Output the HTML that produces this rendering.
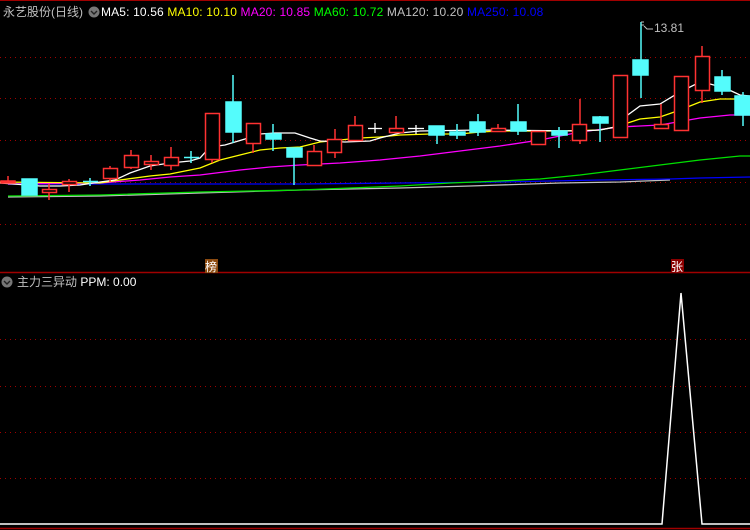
<!DOCTYPE html>
<html><head><meta charset="utf-8"><style>
body{margin:0;background:#000;width:750px;height:530px;overflow:hidden;position:relative;font-family:"Liberation Sans","Noto Sans CJK SC",sans-serif;}
.t{position:absolute;font-size:12px;white-space:nowrap;line-height:14px;}
svg{position:absolute;left:0;top:0}
</style></head><body>
<svg width="750" height="530" viewBox="0 0 750 530">
<line x1="0" y1="0.5" x2="750" y2="0.5" stroke="#a00000" stroke-width="1"/>
<line x1="0" y1="272.5" x2="750" y2="272.5" stroke="#a00000" stroke-width="1.5"/>
<line x1="0" y1="528.5" x2="750" y2="528.5" stroke="#a00000" stroke-width="1.5"/>
<g stroke="#a00000" stroke-width="1" stroke-dasharray="1 4" shape-rendering="crispEdges">
<line x1="0" y1="57.5" x2="750" y2="57.5"/><line x1="0" y1="98.5" x2="750" y2="98.5"/>
<line x1="0" y1="140.5" x2="750" y2="140.5"/><line x1="0" y1="182.5" x2="750" y2="182.5"/>
<line x1="0" y1="224.5" x2="750" y2="224.5"/>
<line x1="0" y1="339.5" x2="750" y2="339.5"/><line x1="0" y1="386.5" x2="750" y2="386.5"/>
<line x1="0" y1="432.5" x2="750" y2="432.5"/><line x1="0" y1="478.5" x2="750" y2="478.5"/>
</g>
<g fill="none" stroke-width="1.3">
<polyline stroke="#c0c0c0" points="8,197 100,196 200,193 300,190 400,188 470,186 560,183 620,182 670,180"/>
<polyline stroke="#0000ff" points="8,184 220,184 300,184 400,183 500,182 550,181 600,180 670,179 700,178 750,177"/>
<polyline stroke="#00e000" points="8,196 100,195 200,192 300,190 350,188 400,186 450,183 500,181 540,179 580,175 620,170 660,165 700,160 740,156 750,156"/>
<polyline stroke="#ff00ff" points="8,184 100,183 140,180 170,177 200,175 240,170 270,167 300,165 340,163 380,160 420,156 460,151 500,146 540,140 580,132 620,127 660,125 700,118 730,115 750,115"/>
<polyline stroke="#ffff00" points="0,182 100,183 120,180 150,176 170,174 200,168 220,160 240,155 260,150 280,148 300,147 320,142 340,140 360,138 380,137 400,135 430,134 460,134 480,132 500,131 560,131 600,130 615,127 640,119 660,117 680,110 700,102 720,99 750,99"/>
<polyline stroke="#ffffff" points="0,183 40,186 60,186 80,185 100,182 115,180 130,173 150,166 170,163 190,161 200,158 210,147 225,145 245,139 260,134 275,133 295,133 310,138 320,141 345,142 370,141 380,138 400,133 420,131 480,130 580,131 600,130 615,127 625,117 640,106 660,104 680,92 700,82 710,84 725,88 740,95 750,96"/>
</g>
<g stroke="#ff3232" stroke-width="1.5" fill="#000">
<line x1="8" y1="176" x2="8" y2="182"/><rect x="1" y="181" width="14" height="2" fill="#ff3232"/>
<line x1="49" y1="184" x2="49" y2="200"/><rect x="42.5" y="189.5" width="14" height="3"/>
<line x1="69" y1="179" x2="69" y2="192"/><rect x="62.5" y="181.5" width="14" height="3"/>
<line x1="110" y1="166" x2="110" y2="182"/><rect x="103.5" y="168.5" width="14" height="10"/>
<line x1="131" y1="150" x2="131" y2="169"/><rect x="124.5" y="155.5" width="14" height="12"/>
<line x1="151" y1="155" x2="151" y2="170"/><rect x="144.5" y="161.5" width="14" height="3"/>
<line x1="171" y1="147" x2="171" y2="170"/><rect x="164.5" y="157.5" width="14" height="8"/>
<line x1="212" y1="159" x2="212" y2="163"/><rect x="205.5" y="113.5" width="14" height="46"/>
<line x1="253" y1="143" x2="253" y2="153"/><rect x="246.5" y="123.5" width="14" height="20"/>
<line x1="314" y1="145" x2="314" y2="165"/><rect x="307.5" y="151.5" width="14" height="14"/>
<line x1="335" y1="129" x2="335" y2="158"/><rect x="327.5" y="139.5" width="14" height="13"/>
<line x1="355" y1="116" x2="355" y2="141"/><rect x="348.5" y="125.5" width="14" height="15"/>
<line x1="396" y1="116" x2="396" y2="132"/><rect x="389.5" y="128.5" width="14" height="4"/>
<line x1="498" y1="124" x2="498" y2="132"/><rect x="491.5" y="128.5" width="14" height="3"/>
<rect x="531.5" y="131.5" width="14" height="13"/>
<line x1="580" y1="99" x2="580" y2="144"/><rect x="572.5" y="124.5" width="14" height="16"/>
<line x1="620" y1="125" x2="620" y2="137"/><rect x="613.5" y="75.5" width="14" height="62"/>
<line x1="661" y1="104" x2="661" y2="128"/><rect x="654.5" y="124.5" width="14" height="4"/>
<rect x="674.5" y="76.5" width="14" height="54"/>
<line x1="702" y1="46" x2="702" y2="103"/><rect x="695.5" y="56.5" width="14" height="34"/>
</g>
<g stroke="#54fcfc" stroke-width="1.5" fill="#54fcfc">
<rect x="22" y="179" width="15" height="16"/>
<line x1="90" y1="178" x2="90" y2="186"/><line x1="83" y1="181.5" x2="98" y2="181.5"/>
<line x1="191" y1="151" x2="191" y2="163"/><line x1="184" y1="157.5" x2="199" y2="157.5"/>
<line x1="233" y1="75" x2="233" y2="143"/><rect x="226" y="102" width="15" height="30"/>
<line x1="273" y1="124" x2="273" y2="151"/><rect x="266" y="134" width="15" height="5"/>
<line x1="294" y1="157" x2="294" y2="185"/><rect x="287" y="148" width="15" height="9"/>
<line x1="437" y1="135" x2="437" y2="144"/><rect x="429" y="126" width="15" height="9"/>
<line x1="457" y1="124" x2="457" y2="139"/><rect x="450" y="132" width="15" height="3"/>
<line x1="478" y1="114" x2="478" y2="136"/><rect x="470" y="122" width="15" height="10"/>
<line x1="518" y1="104" x2="518" y2="135"/><rect x="511" y="122" width="15" height="9"/>
<line x1="559" y1="127" x2="559" y2="148"/><rect x="552" y="131" width="15" height="4"/>
<line x1="600" y1="116" x2="600" y2="142"/><rect x="593" y="117" width="15" height="6"/>
<line x1="641" y1="22" x2="641" y2="98"/><rect x="633" y="60" width="15" height="15"/>
<line x1="722" y1="70" x2="722" y2="95"/><rect x="715" y="77" width="15" height="14"/>
<line x1="743" y1="92" x2="743" y2="126"/><rect x="735" y="96" width="15" height="19"/>
</g>
<g stroke="#fff" stroke-width="1.3">
<line x1="375" y1="123" x2="375" y2="133"/><line x1="368" y1="128.5" x2="382" y2="128.5"/>
<line x1="416" y1="125" x2="416" y2="134"/><line x1="408" y1="128.5" x2="424" y2="128.5"/>
</g>
<path d="M641 22 L644 22 M641 25 L644 25 M644 26 L647 29 L653 29" stroke="#c0c0c0" fill="none" stroke-width="1"/>
<text x="654" y="32" fill="#c0c0c0" font-size="12" font-family="Liberation Sans">13.81</text>
<rect x="205" y="259" width="13" height="14" fill="#8b4a10"/>
<rect x="671" y="259" width="13" height="14" fill="#8b0000"/>
<text x="205" y="271" fill="#fff" font-size="12" font-family="Noto Sans CJK SC">榜</text>
<text x="671" y="271" fill="#fff" font-size="12" font-family="Noto Sans CJK SC">张</text>
<polyline fill="none" stroke="#fff" stroke-width="1.5" points="0,524 662,524 681,293 702,524 750,524"/>
<circle cx="94" cy="12" r="5.5" fill="#777"/><path d="M91 11 L94 14 L97 11" stroke="#222" stroke-width="1.4" fill="none"/>
<circle cx="7" cy="282" r="5.5" fill="#777"/><path d="M4 281 L7 284 L10 281" stroke="#222" stroke-width="1.4" fill="none"/>
</svg>
<div class="t" style="left:3px;top:5px;color:#c0c0c0">永艺股份(日线)</div>
<div class="t" style="left:101px;top:5px;color:#fff;letter-spacing:0.15px">MA5: 10.56 <span style="color:#ffff00">MA10: 10.10</span> <span style="color:#ff00ff">MA20: 10.85</span> <span style="color:#00ff00">MA60: 10.72</span> <span style="color:#c0c0c0">MA120: 10.20</span> <span style="color:#0000ff">MA250: 10.08</span></div>
<div class="t" style="left:17px;top:275px;color:#c0c0c0">主力三异动 <span style="color:#fff">PPM: 0.00</span></div>
</body></html>
